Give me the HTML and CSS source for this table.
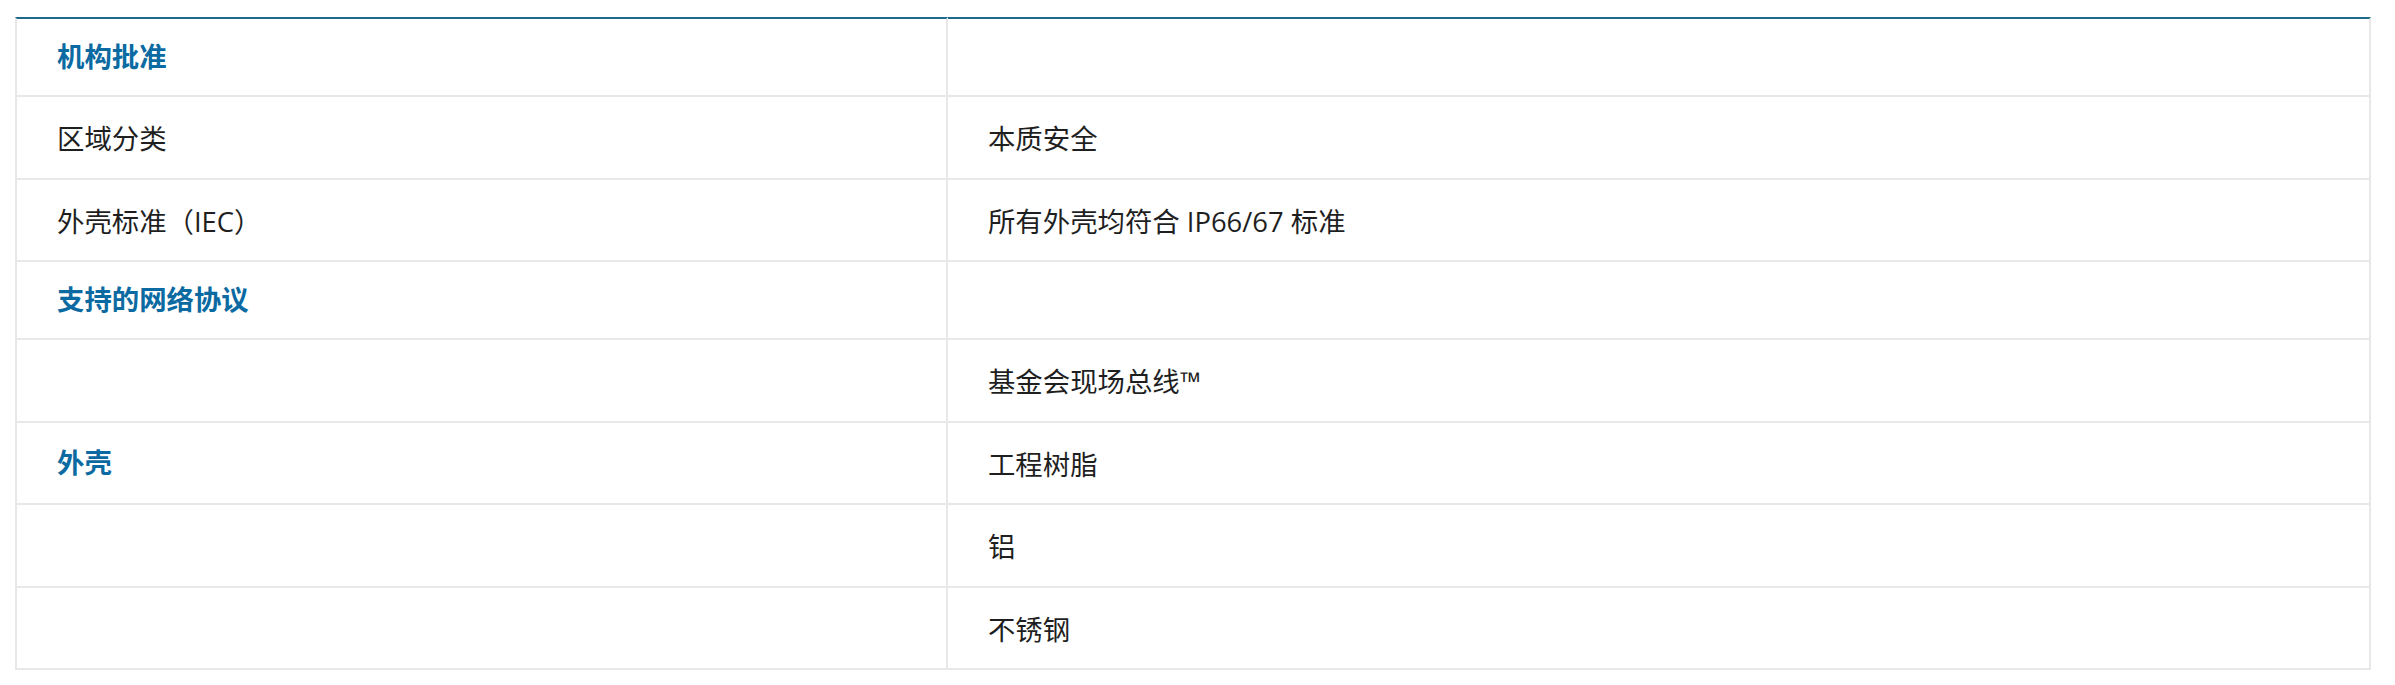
FILE: index.html
```html
<!DOCTYPE html>
<html lang="zh-CN">
<head>
<meta charset="utf-8">
<title>规格</title>
<link rel="stylesheet" href="styles.css">
</head>
<body>
<table class="spec">
  <tbody>
    <tr class="group">
      <td class="label head"><span class="heading">机构批准</span></td>
      <td class="value"></td>
    </tr>
    <tr>
      <td class="label">区域分类</td>
      <td class="value">本质安全</td>
    </tr>
    <tr>
      <td class="label">外壳标准（IEC）</td>
      <td class="value">所有外壳均符合 IP66/67 标准</td>
    </tr>
    <tr class="group">
      <td class="label head"><span class="heading">支持的网络协议</span></td>
      <td class="value"></td>
    </tr>
    <tr>
      <td class="label"></td>
      <td class="value">基金会现场总线™</td>
    </tr>
    <tr>
      <td class="label head"><span class="heading">外壳</span></td>
      <td class="value">工程树脂</td>
    </tr>
    <tr>
      <td class="label"></td>
      <td class="value">铝</td>
    </tr>
    <tr>
      <td class="label"></td>
      <td class="value">不锈钢</td>
    </tr>
  </tbody>
</table>
</body>
</html>
```

FILE: styles.css
```css
html, body {
  background: #ffffff;
}
body {
  margin: 17px 24px 0 15px;
  font-family: "Open Sans", "Noto Sans CJK SC", sans-serif;
  font-size: 27.4px;
  color: #1f1f1f;
}
.spec {
  width: 100%;
  border-collapse: separate;
  border-spacing: 0;
  table-layout: fixed;
}
.spec td {
  box-sizing: border-box;
  padding: 26px 40px 22px;
  line-height: 32.5px;
  vertical-align: middle;
  border-right: 2px solid #e8e8e8;
  border-bottom: 2px solid #e8e8e8;
  text-align: left;
}
.spec td.label {
  width: 39.6%;
  border-left: 2px solid #e8e8e8;
}
.spec td.head {
  padding-top: 24px;
  padding-bottom: 24px;
  line-height: 28px;
}
.spec tr:first-child td {
  border-top: 2px solid #1d6a8c;
}
.heading {
  font-weight: 700;
  color: #0b6aa2;
}
```
